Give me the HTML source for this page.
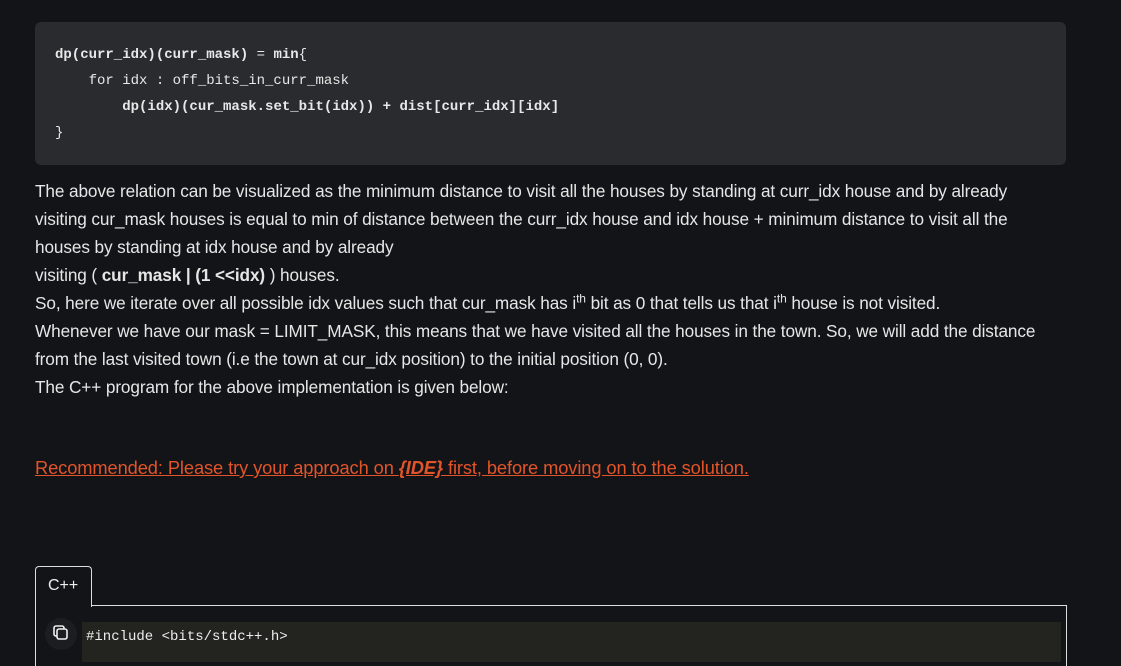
<!DOCTYPE html>
<html><head><style>
body{margin:0;background:#131417;width:1121px;height:655px;overflow:hidden;position:relative;font-family:"Liberation Sans",sans-serif;color:#e6e6e6}
.code{position:absolute;left:35px;top:22px;width:1031px;height:143px;background:#2a2b2f;border-radius:6px}
.code pre{margin:0;position:absolute;left:20px;top:20px;font-family:"Liberation Mono",monospace;font-size:14px;line-height:26px;color:#e8e8e8}
.p{position:absolute;left:35px;top:177px;font-size:17.2px;line-height:28px;white-space:nowrap;letter-spacing:-0.1px}
sup{font-size:12px;line-height:0}
.link{position:absolute;left:35px;top:457px;font-size:18.3px;color:#e2542a;text-decoration:underline;letter-spacing:-0.1px;white-space:nowrap}
.tab{position:absolute;left:35px;top:566px;width:55px;height:40px;border:1px solid #ddd;border-bottom:none;border-radius:4px 4px 0 0;background:#131417;color:#eee;font-size:16px;line-height:38px;text-indent:12px;z-index:2}
.box{position:absolute;left:35px;top:605px;width:1030px;height:60px;border-left:1px solid #ddd;border-top:1px solid #ddd;border-right:1px solid #ddd;}
.inner{position:absolute;left:82px;top:622px;width:979px;height:40px;background:#23241f;font-family:"Liberation Mono",monospace;font-size:14px;color:#eee}
.copy{position:absolute;left:45px;top:618px;width:32px;height:32px;border-radius:50%;background:#1c1d20}
</style></head><body>
<div class="code"><pre><b>dp(curr_idx)(curr_mask)</b> = <b>min</b>{
    for idx : off_bits_in_curr_mask
        <b>dp(idx)(cur_mask.set_bit(idx)) + dist[curr_idx][idx]</b>
}</pre></div>
<div class="p">The above relation can be visualized as the minimum distance to visit all the houses by standing at curr_idx house and by already<br>
visiting cur_mask houses is equal to min of distance between the curr_idx house and idx house + minimum distance to visit all the<br>
houses by standing at idx house and by already<br>
visiting ( <b>cur_mask | (1 &lt;&lt;idx)</b> ) houses.<br>
So, here we iterate over all possible idx values such that cur_mask has i<sup>th</sup> bit as 0 that tells us that i<sup>th</sup> house is not visited.<br>
Whenever we have our mask = LIMIT_MASK, this means that we have visited all the houses in the town. So, we will add the distance<br>
from the last visited town (i.e the town at cur_idx position) to the initial position (0, 0).<br>
The C++ program for the above implementation is given below:</div>
<div class="link">Recommended: Please try your approach on <b><i>{IDE}</i></b> first, before moving on to the solution.</div>
<div class="tab">C++</div>
<div class="box"></div>
<div class="inner"><div style="position:absolute;left:4px;top:7px">#include &lt;bits/stdc++.h&gt;</div></div>
<div class="copy"><svg width="32" height="32" viewBox="0 0 32 32"><rect x="9" y="8" width="10" height="10" rx="2" fill="none" stroke="#eee" stroke-width="1.6"/><rect x="12" y="11" width="10" height="10" rx="2" fill="#1c1d20" stroke="#eee" stroke-width="1.6"/></svg></div>
</body></html>
